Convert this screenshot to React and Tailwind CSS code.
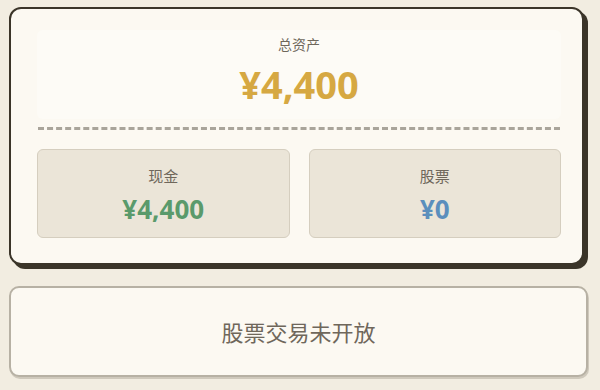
const fontStack = { fontFamily: '"Noto Sans", "Noto Sans CJK SC", sans-serif' };

function StatBox({ label, value, color }) {
  return (
    <div className="flex h-[89px] flex-col items-center rounded-md border border-[#d5cebf] bg-[#ebe5d8] pt-[15px]">
      <span className="text-[15px] leading-[22px] text-[#6f675b]">{label}</span>
      <span className={`mt-[6px] text-[26px] font-bold leading-[32px] ${color}`}>{value}</span>
    </div>
  );
}

export default function App() {
  return (
    <div
      className="flex h-[390px] w-[600px] flex-col overflow-hidden bg-[#f2ede1] pl-[9px] pr-[12px] pt-[7px]"
      style={fontStack}
    >
      {/* assets summary */}
      <div className="mr-[4px] rounded-[12px] border-2 border-[#3b3529] bg-[#fcf9f2] pb-[25px] pl-[26px] pr-[21px] pt-[21px] shadow-[4px_4px_0_#3b3529]">
        <div className="flex flex-col items-center rounded-md bg-[#fdfbf6] pb-[12px] pt-[5px]">
          <span className="text-[14px] leading-[20px] text-[#6f675b]">总资产</span>
          <span className="mt-[6px] text-[38px] font-bold leading-[46px] text-[#d6a842]">¥4,400</span>
        </div>
        <div className="mx-[1px] mt-[8px] border-t-[3px] border-dashed border-[#a9a49a]" />
        <div className="mt-[19px] grid grid-cols-2 gap-[19px]">
          <StatBox label="现金" value="¥4,400" color="text-[#5a9a6b]" />
          <StatBox label="股票" value="¥0" color="text-[#5b8fbd]" />
        </div>
      </div>

      {/* trading notice */}
      <div className="mt-[21px] flex h-[91px] items-center justify-center rounded-[10px] border-2 border-[#b7b1a4] bg-[#fcf9f2] shadow-[1px_2px_0_#cfc9bc]">
        <span className="text-[22px] leading-[30px] text-[#6f675b]">股票交易未开放</span>
      </div>
    </div>
  );
}
